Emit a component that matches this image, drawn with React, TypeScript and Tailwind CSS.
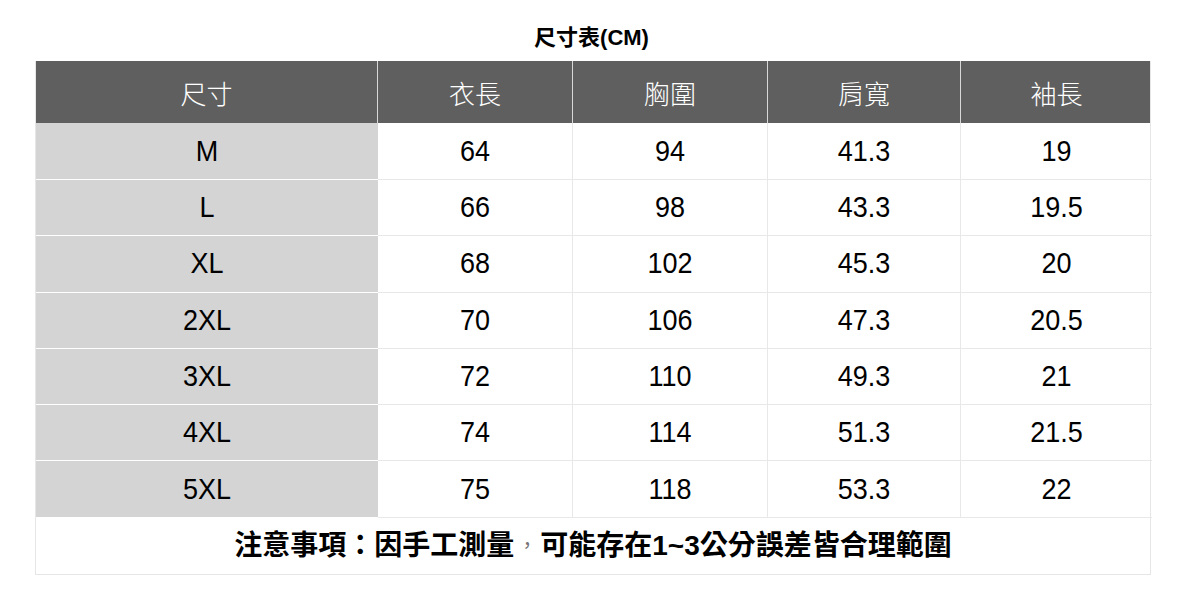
const headers = ['尺寸', '衣長', '胸圍', '肩寬', '袖長'];

const rows: [string, string, string, string, string][] = [
  ['M', '64', '94', '41.3', '19'],
  ['L', '66', '98', '43.3', '19.5'],
  ['XL', '68', '102', '45.3', '20'],
  ['2XL', '70', '106', '47.3', '20.5'],
  ['3XL', '72', '110', '49.3', '21'],
  ['4XL', '74', '114', '51.3', '21.5'],
  ['5XL', '75', '118', '53.3', '22'],
];

const font = "font-['Liberation_Sans','Noto_Sans_CJK_TC',sans-serif]";

export default function App() {
  return (
    <div className={`w-[1183px] h-[600px] bg-white ${font} text-black`}>
      {/* title */}
      <div className="h-[61px] flex items-end justify-center pb-[12px]">
        <span className="text-[22px] font-bold leading-none">尺寸表(CM)</span>
      </div>

      <div className="ml-[35px] w-[1116px] border-l border-r border-[#e6e6e6]">
        {/* header */}
        <div className="grid grid-cols-[342px_195px_195px_193px_191px] h-[62px] bg-[#5f5f5f]">
          {headers.map((h, i) => (
            <div
              key={h}
              className={`flex items-center justify-center text-white text-[26px] font-light font-['Noto_Sans_CJK_TC',sans-serif] ${
                i < headers.length - 1 ? 'border-r border-[#d8d8d8]' : ''
              }`}
            >
              {h}
            </div>
          ))}
        </div>

        {/* body */}
        {rows.map((r, ri) => (
          <div
            key={r[0]}
            className={`grid grid-cols-[342px_195px_195px_193px_191px] ${ri === 0 ? 'h-[57px]' : 'h-[56.3px]'}`}
          >
            {r.map((v, i) => (
              <div
                key={i}
                className={`flex items-center justify-center text-[27px] leading-none ${
                  i === 0
                    ? 'bg-[#d4d4d4] border-b border-white'
                    : `border-b border-[#e8e8e8] ${i < r.length - 1 ? 'border-r' : ''}`
                }`}
              >
                <span className="inline-block scale-y-[1.07]">{v}</span>
              </div>
            ))}
          </div>
        ))}

        {/* note */}
        <div className="h-[57px] flex items-center justify-center border-b border-[#e6e6e6] text-[28px] font-bold leading-none">
          注意事項：因手工測量
          <span className="inline-block w-[26px] text-center font-normal text-[#777] text-[20px]">，</span>
          可能存在1~3公分誤差皆合理範圍
        </div>
      </div>
    </div>
  );
}
